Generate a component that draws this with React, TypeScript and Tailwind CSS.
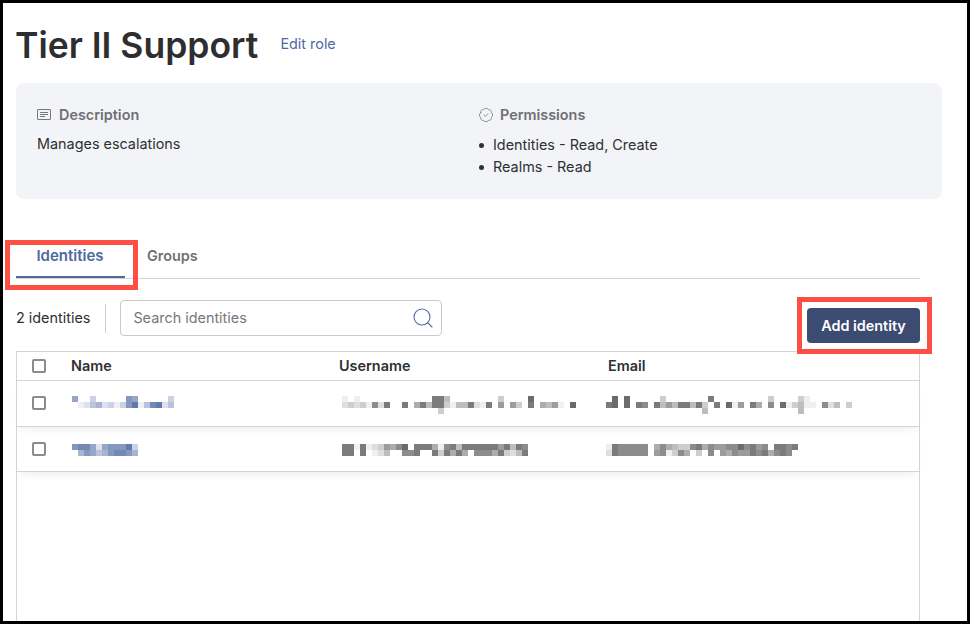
import React from 'react';
import { BadgeCheck, Search } from 'lucide-react';

const NAME_INK = [79, 106, 163];
const TEXT_INK = [90, 90, 90];

// Redacted text: each digit is how dark that 6px cell is
const Redacted: React.FC<{ rows: string[]; ink: number[] }> = ({ rows, ink }) => {
  const cols = Math.max(...rows.map((r) => r.length));
  return (
    <svg width={cols * 6} height={rows.length * 6} className="block" shapeRendering="crispEdges">
      {rows.map((row, y) =>
        row.split('').map((c, x) => {
          const v = parseInt(c, 16) / 10;
          if (!v) return null;
          const [r, g, b] = ink.map((i) => Math.round(255 - (255 - i) * Math.min(v, 1)));
          return <rect key={`${x}-${y}`} x={x * 6} y={y * 6} width="6" height="6" fill={`rgb(${r},${g},${b})`} />;
        })
      )}
    </svg>
  );
};

const Checkbox: React.FC = () => (
  <span className="block h-[14px] w-[14px] rounded-[2px] border-2 border-[#8b8b8b] bg-white" />
);

const identities = [
  {
    name: ['60030000076000003', '01245231379148924'],
    username: [
      '101000000000000884000000003000090',
      '232317280080584883144821806063080546109',
      '00000000000000003',
    ],
    email: [
      '090900000300000008000000000300003100',
      '89090870846488483080916085070913411072403',
      '00000000000000004000000000000000400',
    ],
    rowClass: 'h-[46px]',
    offset: '',
  },
  {
    name: ['78862677793', '05764578875'],
    username: [
      '8818123657908885178488888868487',
      '8808012400778008385850777583248',
    ],
    email: [
      '18777770575433785766779786708878',
      '28777770671375030706576687857870',
    ],
    rowClass: 'h-[45px]',
    offset: 'mt-[2px]',
  },
];

export default function App() {
  return (
    <div
      className="relative h-[624px] w-[970px] overflow-hidden border-[3px] border-black bg-white text-[14.4px] text-[#2f3033]"
      style={{ fontFamily: 'Inter, "Liberation Sans", sans-serif' }}
    >
      <div className="flex h-full flex-col pl-[13px] pr-[47px]">
        {/* Header */}
        <div className="mt-[19px] flex h-[48px] items-center gap-[22px]">
          <h1 className="-ml-[1px] text-[35.5px] font-semibold leading-[48px] text-[#2e2e30]">Tier II Support</h1>
          <a className="-mt-[4px] text-[#4d6a9f]">Edit role</a>
        </div>

        {/* Summary */}
        <div className="mt-[13px] -mr-[22px] flex h-[116px] rounded-lg bg-[#f3f4f8] px-[21px] pt-[22px]">
          <div className="w-[442px]">
            <div className="flex h-[20px] items-center gap-2 font-semibold text-[#6f7073]">
              <svg width="14" height="12" viewBox="0 0 14 12" fill="none" stroke="#77787b" strokeWidth="1">
                <rect x="0.5" y="0.5" width="13" height="10" rx="0.5" />
                <path d="M3 3.5h8M3 5.5h8M3 7.5h5" />
              </svg>
              Description
            </div>
            <p className="mt-[9px] leading-5">Manages escalations</p>
          </div>
          <div>
            <div className="flex h-[20px] items-center gap-[6px] font-semibold text-[#6f7073]">
              <BadgeCheck size={16} strokeWidth={1} color="#5f6063" className="-ml-[1px]" />
              Permissions
            </div>
            <ul className="mt-[9px] leading-[22px]">
              <li className="flex items-center gap-[9px]">
                <span className="h-[5px] w-[5px] rounded-full bg-[#2f3033]" />
                Identities - Read, Create
              </li>
              <li className="flex items-center gap-[9px]">
                <span className="h-[5px] w-[5px] rounded-full bg-[#2f3033]" />
                Realms - Read
              </li>
            </ul>
          </div>
        </div>

        {/* Tabs */}
        <div className="mt-[38px] flex h-[42px] border-b border-[#d4d4d6] font-semibold">
          <div className="flex h-[41px] w-[109px] items-start justify-center border-b-2 border-[#4d6a9f] pt-[8px] pr-[1px] text-[15px] text-[#4d6a9f]">
            Identities
          </div>
          <div className="ml-[22px] pt-[8px] text-[#6f7073]">Groups</div>
        </div>

        {/* Toolbar */}
        <div className="mt-[21px] flex h-[36px] items-center">
          <span>2 identities</span>
          <span className="ml-[15px] h-[29px] w-px bg-[#cfcfd1]" />
          <div className="ml-[14px] flex h-[36px] w-[322px] items-center justify-between rounded border border-[#c9c9cc] pl-3 pr-[6px]">
            <span className="text-[#77787b]">Search identities</span>
            <Search size={24} strokeWidth={1.1} color="#4d6a9f" />
          </div>
          <button className="ml-auto mt-[15px] h-[35px] w-[113px] rounded bg-[#3b4b71] font-semibold text-white">
            Add identity
          </button>
        </div>

        {/* Table */}
        <div className="mt-[15px] min-h-0 flex-1 border border-b-0 border-[#d4d4d6]">
          <div className="flex h-[29px] items-center border-b border-[#d4d4d6] font-semibold">
            <div className="w-[54px] pl-[15px]">
              <Checkbox />
            </div>
            <div className="w-[268px]">Name</div>
            <div className="w-[269px]">Username</div>
            <div>Email</div>
          </div>
          {identities.map((row, i) => (
            <div
              key={i}
              className={`flex border-b border-[#d4d4d6] pt-[15px] shadow-[0_6px_8px_-4px_rgba(0,0,0,0.08)] ${row.rowClass}`}
            >
              <div className="w-[55px] pl-[15px]">
                <Checkbox />
              </div>
              <div className={`w-[270px] ${row.offset}`}>
                <Redacted rows={row.name} ink={NAME_INK} />
              </div>
              <div className={`w-[264px] ${row.offset}`}>
                <Redacted rows={row.username} ink={TEXT_INK} />
              </div>
              <div className={row.offset}>
                <Redacted rows={row.email} ink={TEXT_INK} />
              </div>
            </div>
          ))}
        </div>
      </div>

      {/* Annotation boxes */}
      <div className="absolute left-[2px] top-[237px] h-[50px] w-[133px] border-[5px] border-[#fb5043]" />
      <div className="absolute left-[794px] top-[294px] h-[57px] w-[135px] border-[5px] border-[#fb5043]" />
    </div>
  );
}
